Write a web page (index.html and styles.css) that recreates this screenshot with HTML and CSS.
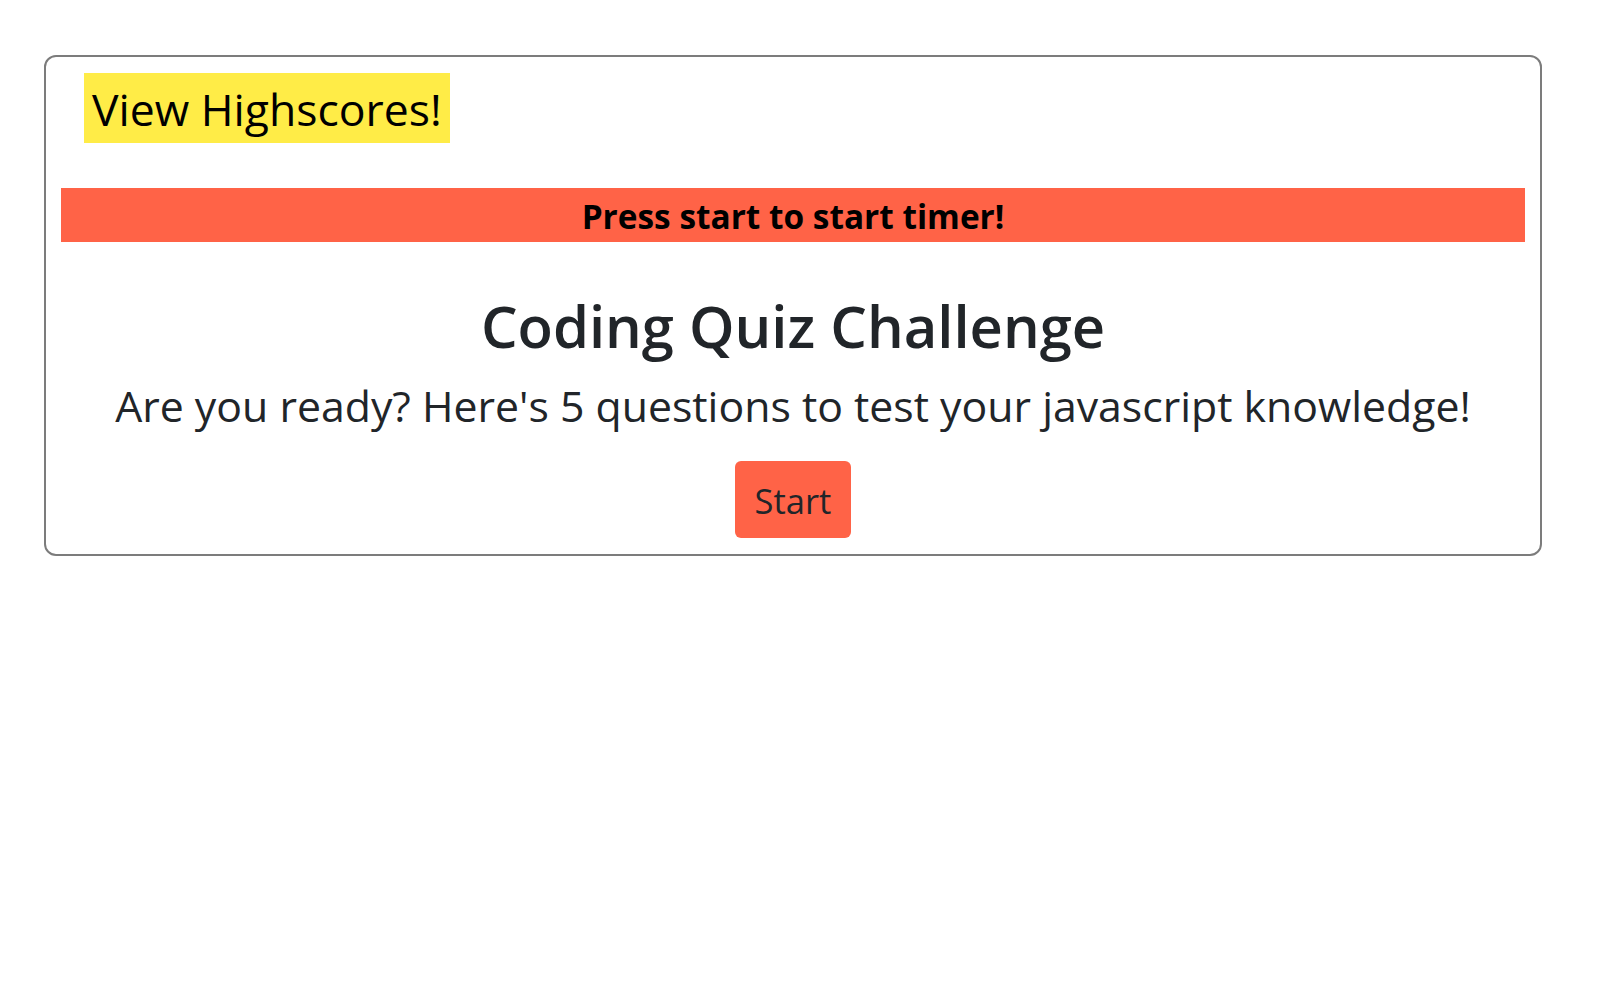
FILE: index.html
```html
<!DOCTYPE html>
<html lang="en">
<head>
<meta charset="utf-8">
<title>Coding Quiz Challenge</title>
<link rel="stylesheet" href="styles.css">
</head>
<body>
<div class="card">
  <header class="top">
    <a class="highscores">View Highscores!</a>
  </header>
  <div class="timer">Press start to start timer!</div>
  <main class="intro">
    <h1 class="title">Coding Quiz Challenge</h1>
    <p class="lead">Are you ready? Here's 5 questions to test your javascript knowledge!</p>
    <button class="start">Start</button>
  </main>
</div>
</body>
</html>
```
FILE: styles.css
```css
html, body {
  margin: 0;
  padding: 0;
  background: #ffffff;
}
body {
  font-family: "Open Sans", "Noto Sans", "Liberation Sans", sans-serif;
  color: #212529;
}
.card {
  box-sizing: border-box;
  width: 1498px;
  margin: 55px 0 0 44px;
  border: 2px solid #7c7c7c;
  border-radius: 12px;
  padding: 16px 15px 16px 15px;
  display: flex;
  flex-direction: column;
}
.top {
  display: flex;
  padding-left: 23px;
}
.highscores {
  display: inline-block;
  background: #ffec47;
  color: #000;
  height: 70px;
  line-height: 72px;
  padding: 0 8px;
  font-size: 44.5px;
  white-space: nowrap;
}
.timer {
  margin-top: 45px;
  height: 54px;
  line-height: 57px;
  background: #ff6347;
  color: #000;
  text-align: center;
  font-weight: 700;
  font-size: 33.4px;
}
.intro {
  display: flex;
  flex-direction: column;
  align-items: center;
}
.title {
  margin: 49px 0 0 0;
  font-size: 57.9px;
  line-height: 70px;
  font-weight: 600;
  white-space: nowrap;
}
.lead {
  margin: 15px 0 0 0;
  font-size: 42.8px;
  line-height: 60px;
  font-weight: 400;
  white-space: nowrap;
}
.start {
  margin-top: 25px;
  width: 116px;
  height: 77px;
  border: none;
  border-radius: 6px;
  background: #ff6347;
  color: #212529;
  font-family: inherit;
  font-size: 34.5px;
  line-height: 80px;
  padding: 0;
}
```
